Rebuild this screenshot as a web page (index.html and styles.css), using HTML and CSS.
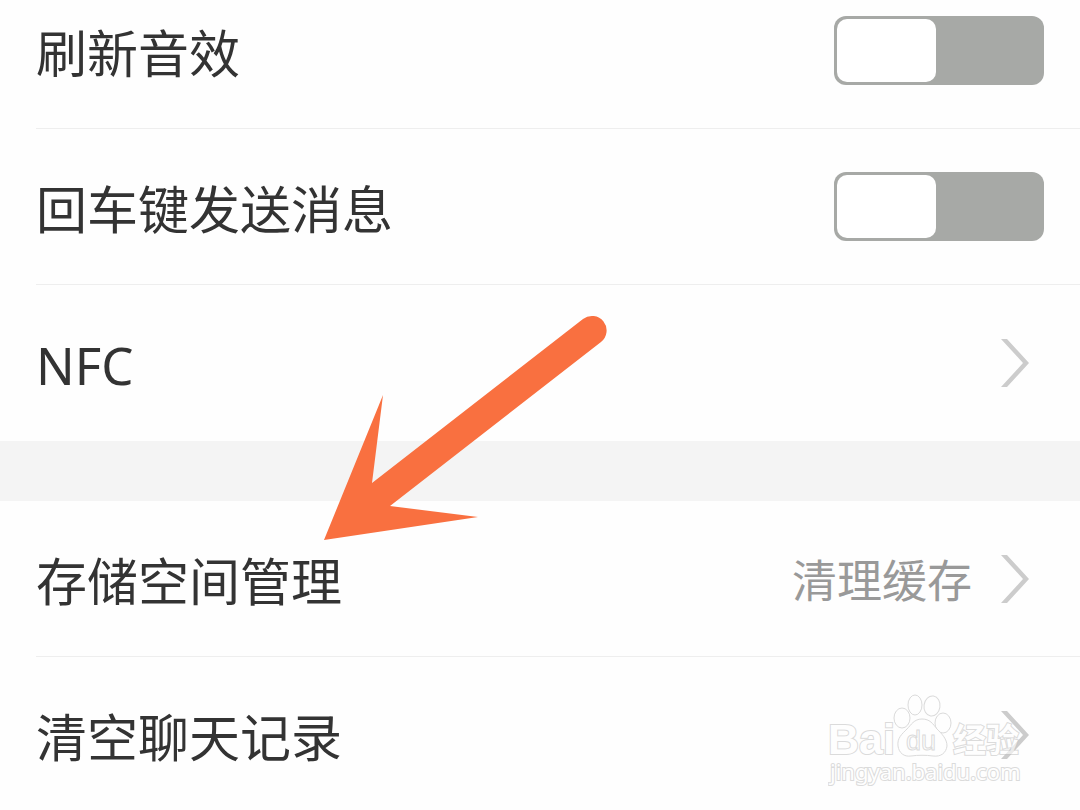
FILE: index.html
```html
<!DOCTYPE html>
<html lang="zh-CN">
<head>
  <meta charset="UTF-8">
  <meta name="viewport" content="width=device-width, initial-scale=1.0">
  <title>设置</title>
  <link rel="stylesheet" href="styles.css">
</head>
<body>

<main class="settings">
  <section class="group">
    <div class="row">
      <label class="title" for="refreshSound">刷新音效</label>
      <input type="checkbox" id="refreshSound" class="switch">
    </div>
    <div class="row">
      <label class="title" for="enterSend">回车键发送消息</label>
      <input type="checkbox" id="enterSend" class="switch">
    </div>
    <a class="row link" href="#nfc">
      <span class="title">NFC</span>
      <svg class="chevron" viewBox="0 0 28 48"><path d="M0 0h6l22 24-22 24H0l22-24z"/></svg>
    </a>
  </section>

  <section class="group">
    <a class="row link" href="#storage">
      <span class="title">存储空间管理</span>
      <span class="value">清理缓存</span>
      <svg class="chevron" viewBox="0 0 28 48"><path d="M0 0h6l22 24-22 24H0l22-24z"/></svg>
    </a>
    <a class="row link" href="#clear">
      <span class="title">清空聊天记录</span>
      <svg class="chevron" viewBox="0 0 28 48"><path d="M0 0h6l22 24-22 24H0l22-24z"/></svg>
    </a>
  </section>
</main>

<!-- arrow pointing at the storage row -->
<svg class="arrow" viewBox="0 0 284 226" aria-hidden="true">
  <path d="M1 225 60 80 49 168 260 4A14 14 0 0 1 278 27L67 191 155 202Z"/>
</svg>

<svg class="watermark" viewBox="0 0 200 100" aria-hidden="true">
  <g class="mark">
    <ellipse cx="74" cy="26" rx="8" ry="10"/>
    <ellipse cx="87" cy="13" rx="7" ry="10"/>
    <ellipse cx="104" cy="14" rx="8" ry="10" transform="rotate(8 104 14)"/>
    <ellipse cx="115" cy="31" rx="8" ry="10"/>
    <path d="M94 27C86 27 83 33 79 37C74 42 69 46 70 54C71 61 76 65 83 64C90 63 98 63 105 64C113 65 118 61 119 54C119 47 114 42 109 37C105 32 102 27 94 27Z"/>
    <text class="brand" x="0" y="62">Bai</text>
    <text class="du" x="78" y="58">du</text>
    <text class="exp" x="125" y="60">经验</text>
    <text class="site" x="2" y="88">jingyan.baidu.com</text>
  </g>
</svg>

</body>
</html>
```
FILE: styles.css
```css
* {
  box-sizing: border-box;
}
html {
  overflow: hidden;
}
body {
  margin: 0;
  position: relative;
  background-color: #fefefe;
  color: #333;
  font-family: "Noto Sans", "Noto Sans CJK SC", sans-serif;
}
/* list is scrolled a little, the first row is cut at the top */
.settings {
  margin-top: -27px;
}
.group + .group {
  border-top: 60px solid #f4f4f4;
}
.row {
  display: flex;
  align-items: center;
  height: 156px;
  margin-left: 36px;
  padding-right: 36px;
  border-bottom: 1px solid #eee;
}
.group .row:last-child {
  border-bottom: none;
}
.link {
  padding-right: 51px;
  color: inherit;
  text-decoration: none;
}
.title {
  flex: 1;
  padding-top: 4px;
  font-size: 51px;
  line-height: 72px;
}
.value {
  padding-top: 4px;
  margin-right: 29px;
  color: #999;
  font-size: 45px;
  line-height: 64px;
}
.chevron {
  width: 28px;
  height: 48px;
  fill: #ccc;
}
.switch {
  appearance: none;
  width: 210px;
  height: 69px;
  margin: 0;
  padding: 3px;
  border-radius: 12px;
  background-color: #a7a9a6;
  cursor: pointer;
}
.switch::before {
  content: "";
  display: block;
  width: 99px;
  height: 63px;
  border-radius: 10px;
  background-color: #fff;
}
.switch:checked {
  background-color: #4cd964;
}
.switch:checked::before {
  margin-left: auto;
}
.arrow {
  position: absolute;
  top: 315px;
  left: 323px;
  width: 284px;
  height: 226px;
  fill: #f97040;
  pointer-events: none;
}
.watermark {
  position: absolute;
  top: 692px;
  right: 52px;
  width: 200px;
  height: 100px;
  pointer-events: none;
}
.mark {
  fill: #fff;
  stroke: #c4c4c4;
  stroke-width: 1px;
  opacity: 0.6;
}
.brand,
.exp,
.site {
  paint-order: stroke;
  stroke-width: 2px;
}
.brand {
  font: bold 43px "Liberation Sans", sans-serif;
}
.du {
  font: 27px "Liberation Sans", sans-serif;
}
.exp {
  font: bold 33px "Noto Sans CJK SC", sans-serif;
}
.site {
  font: 22px "Noto Sans", sans-serif;
}
```
